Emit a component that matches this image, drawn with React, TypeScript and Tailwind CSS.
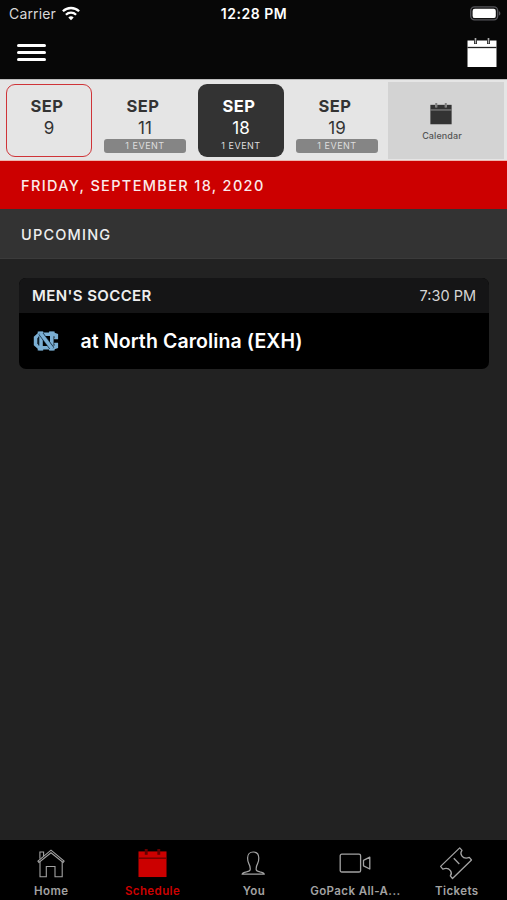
import clsx from "clsx";
import type { ReactNode } from "react";

const days = [
  { month: "SEP", day: "9", today: true },
  { month: "SEP", day: "11", events: "1 EVENT" },
  { month: "SEP", day: "18", events: "1 EVENT", selected: true },
  { month: "SEP", day: "19", events: "1 EVENT" },
];

function WifiIcon() {
  return (
    <svg className="h-[15px] w-[18px]" viewBox="0 0 18 15" fill="none" stroke="#fff" strokeWidth="2.3">
      <path d="M0.9 5.3a11.6 11.6 0 0 1 16.2 0" />
      <path d="M3.9 8.7a7.3 7.3 0 0 1 10.2 0" />
      <path d="M9 14.2 6.3 11.5a3.9 3.9 0 0 1 5.4 0Z" fill="#fff" stroke="none" />
    </svg>
  );
}

function BatteryIcon() {
  return (
    <svg className="h-[15px] w-[31px]" viewBox="0 0 31 15">
      <rect x="0.7" y="0.9" width="27" height="13" rx="3.8" fill="#111" stroke="#55555a" strokeWidth="1.3" />
      <rect x="2.6" y="2.7" width="23.2" height="9.4" rx="2.2" fill="#fff" />
      <path d="M28.9 5.2c2 .7 2 3.7 0 4.4z" fill="#55555a" />
    </svg>
  );
}

function CalendarIcon({ className, line, ring }: { className: string; line: string; ring: string }) {
  return (
    <svg className={className} viewBox="0 0 30 30" preserveAspectRatio="none">
      <path d="M.5 2.5h29V29H.5z" fill="currentColor" />
      <path d="M.5 9.5h29" stroke={line} strokeWidth="1.3" />
      <path d="M8.5 0v6M21.5 0v6" stroke={line} strokeWidth="3" />
      <path d="M8.5 0v5.5M21.5 0v5.5" stroke={ring} strokeWidth="1.4" />
    </svg>
  );
}

function HomeIcon() {
  return (
    <svg className="h-[30px] w-[30px]" viewBox="0 0 30 30" fill="none" stroke="#a3a3a3" strokeWidth="1.1">
      <path d="M1.9 13.1 15 2.2l13.1 10.9-1 1.3L15 4.7 2.9 14.4z" />
      <path d="M4 13.6v15.1h6.3V18.5h8.7v10.2h7.2V13.6" />
      <path d="M3.9 10.8V4h3.7v4" />
    </svg>
  );
}

function PersonIcon() {
  return (
    <svg className="h-[30px] w-[30px]" viewBox="0 0 30 30" fill="none" stroke="#a3a3a3" strokeWidth="1.2" strokeLinejoin="round">
      <path d="M12.2 21.6c.3-2.600-.4-4.200-1.400-6C9.900 14 9.600 12 9.600 10c0-3.800 2.200-6 5.600-6s5.600 2.200 5.600 6c0 2-.3 4-1.200 5.600-1 1.800-1.700 3.400-1.400 6 .2 1.500 1.800 1.900 3.800 2.300 2.300.4 3.800 1 4.300 2.300H4.100c.5-1.300 2-1.900 4.300-2.300 2-.4 3.600-.8 3.800-2.300z" />
    </svg>
  );
}

function VideoIcon() {
  return (
    <svg className="h-[30px] w-[34px]" viewBox="0 0 34 30" fill="none" stroke="#a3a3a3" strokeWidth="1.3" strokeLinejoin="round">
      <rect x="2.2" y="6.2" width="20.4" height="17.8" rx="1.6" />
      <path d="m31.8 9.2-6.3 3.2v5.4l6.3 3.2z" />
    </svg>
  );
}

function TicketIcon() {
  return (
    <svg className="h-[34px] w-[34px]" viewBox="0 0 34 34" fill="none" stroke="#a3a3a3" strokeWidth="1.3" strokeLinejoin="round">
      <path d="M20.7 1.9 1.6 20.4l2.2 2.7c2.9-1.1 6.1-.5 7.6 1.5 1.3 1.8 1 4-.1 5.3l2.2 2.6 19-18.5-2.2-2.6c-3 1.2-6.1.4-7.5-1.6-1.3-1.9-1-4 .2-5.4z" />
      <path d="m14.8 12.3 5.5 5.7" />
    </svg>
  );
}

function NorthCarolinaLogo() {
  return (
    <svg className="h-5 w-[26px]" viewBox="0 0 26 20" fill="none">
      <g stroke="#7bafd4" strokeWidth="3.6">
        <path d="M23.3 8V4.2L20.6 3.2H6.2L2.6 6.5v7l3.6 3.3h14.4l2.7-1V12" />
        <path d="M8 .8v18.4M18.8.8v18.4" />
      </g>
      <path d="m7.4 2 12 16" stroke="#10283c" strokeWidth="4.8" />
      <path d="M7.4 2 19.4 18" stroke="#7bafd4" strokeWidth="3.6" />
      <path d="M4.7 1.3h5.5M16 1.3h5.6M4.7 18.7h5.5M16 18.7h5.6M21.3 7.5H25M21.3 12.5H25" stroke="#7bafd4" strokeWidth="1.5" />
      <path d="M5.6 5.5v9" stroke="#10283c" strokeWidth=".8" />
    </svg>
  );
}

function Tab({ label, active, children }: { label: string; active?: boolean; children: ReactNode }) {
  return (
    <div className={clsx("flex w-[101.4px] flex-col items-center", active ? "text-[#cc0000]" : "text-[#a3a3a3]")}>
      <div className="flex h-[43px] items-center justify-center pt-[3px]">{children}</div>
      <span className="pl-[1px] text-[11.5px] leading-4 font-semibold tracking-[0.4px] whitespace-nowrap">{label}</span>
    </div>
  );
}

export default function App() {
  return (
    <div className="flex h-[900px] w-[507px] flex-col overflow-hidden bg-[#222222] font-['Inter','Liberation_Sans',sans-serif] text-white">
      <header className="h-[79px] shrink-0 bg-[#070707]">
        <div className="grid h-7 grid-cols-3 items-center pr-[8px] pl-[9px]">
          <div className="flex items-center gap-[6px] pb-px text-[14px] tracking-[0.15px] text-[#d8d8d8]">
            Carrier
            <WifiIcon />
          </div>
          <span className="pb-px text-center text-[14px] font-semibold tracking-[0.55px]">12:28 PM</span>
          <div className="-mr-[2px] flex justify-end pb-[2px]">
            <BatteryIcon />
          </div>
        </div>
        <div className="flex items-start justify-between pt-[10px] pr-[10px] pl-[17px]">
          <button className="mt-[6px] flex w-[29px] flex-col gap-[4.5px]" aria-label="Menu">
            <span className="h-[2.5px] w-full rounded-full bg-white" />
            <span className="h-[2.5px] w-full rounded-full bg-white" />
            <span className="h-[2.5px] w-full rounded-full bg-white" />
          </button>
          <CalendarIcon className="h-[30px] w-[30px]" line="#222222" ring="#aaaaaa" />
        </div>
      </header>

      <div className="flex h-[82px] shrink-0 border-t border-b border-t-[#bbbbbb] border-b-[#efb4ae] bg-[#e5e5e5] pl-[6px]">
        <div className="flex w-[382px] gap-[10px] pt-1">
          {days.map((d) => (
            <div
              key={d.day}
              className={clsx(
                "flex h-[73px] w-[86px] shrink-0 flex-col items-center rounded-[9px] border pt-[11px]",
                d.today ? "border-[#cf3438]" : "border-transparent",
                d.selected ? "bg-[#333333] text-white" : "text-[#333333]",
              )}
            >
              <span className="pr-[4px] text-[16.5px] leading-[21px] font-bold tracking-[0.5px]">{d.month}</span>
              <span className="text-[17px] leading-[22px]">{d.day}</span>
              {d.events && (
                <span
                  className={clsx(
                    "h-[14px] w-[82px] rounded-[3px] text-center text-[9px] leading-[14px] tracking-[0.5px] text-[#dedede]",
                    !d.selected && "bg-[#858585]",
                  )}
                >
                  {d.events}
                </span>
              )}
            </div>
          ))}
        </div>
        <div className="mt-[2px] flex h-[77px] w-[116px] flex-col items-center bg-[#d3d3d3] pr-[11px] pt-[21px] text-[#333333]">
          <CalendarIcon className="h-[22px] w-[22px]" line="#999999" ring="#777777" />
          <span className="mt-[5px] pl-[3px] text-[9px] leading-[12px] font-medium tracking-[0.1px] text-[#555555]">Calendar</span>
        </div>
      </div>

      <div className="flex h-[48px] shrink-0 items-center bg-[#cc0000] pt-[2px] pl-[21px] text-[14.5px] font-medium tracking-[1.35px] text-[#fbeaea]">
        FRIDAY, SEPTEMBER 18, 2020
      </div>
      <div className="flex h-[50px] shrink-0 items-center border-b border-[#3b3b3b] bg-[#333333] pt-[3px] pl-[21px] text-[14.5px] font-medium tracking-[1.2px] text-[#eeeeee]">
        UPCOMING
      </div>

      <main className="flex-1 px-[19px] pt-[19px]">
        <div className="w-[470px] overflow-hidden rounded-[7px] bg-black">
          <div className="flex h-[35px] items-center justify-between bg-[#151516] px-[13px]">
            <span className="pt-[2px] text-[15px] font-semibold tracking-[0.4px] text-[#eeeeee]">MEN'S SOCCER</span>
            <span className="text-[14.5px] text-[#d5d5d5]">7:30 PM</span>
          </div>
          <div className="flex h-[56px] items-center pl-[14px]">
            <NorthCarolinaLogo />
            <span className="pt-px pl-[21.5px] text-[19.5px] font-semibold tracking-[0.1px]">at North Carolina (EXH)</span>
          </div>
        </div>
      </main>

      <nav className="flex h-[60px] shrink-0 bg-black">
        <Tab label="Home">
          <HomeIcon />
        </Tab>
        <Tab label="Schedule" active>
          <CalendarIcon className="h-[29px] w-[29px]" line="#650000" ring="#650000" />
        </Tab>
        <Tab label="You">
          <PersonIcon />
        </Tab>
        <Tab label="GoPack All-A...">
          <VideoIcon />
        </Tab>
        <Tab label="Tickets">
          <TicketIcon />
        </Tab>
      </nav>
    </div>
  );
}
